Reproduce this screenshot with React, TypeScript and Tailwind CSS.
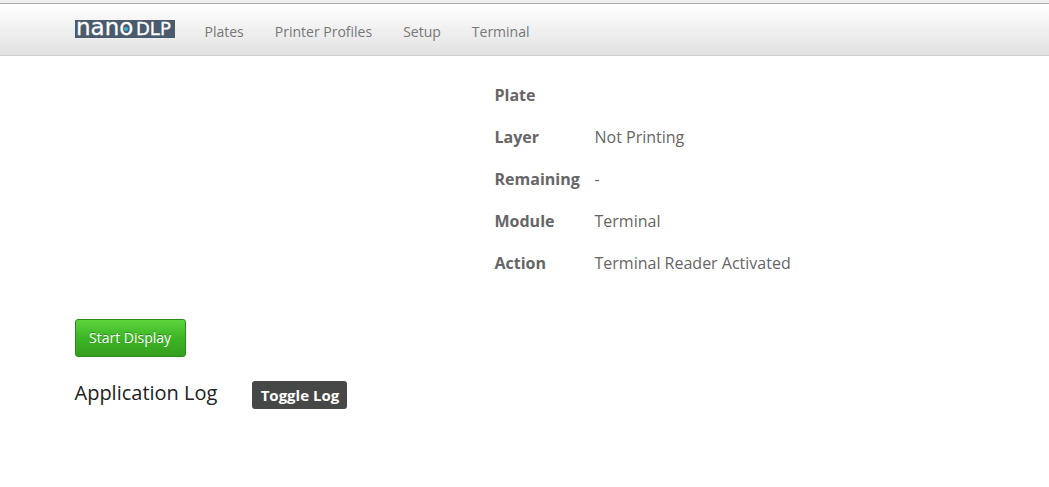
const links = ["Plates", "Printer Profiles", "Setup", "Terminal"];

const status = [
  { label: "Plate", value: "" },
  { label: "Layer", value: "Not Printing" },
  { label: "Remaining", value: "-" },
  { label: "Module", value: "Terminal" },
  { label: "Action", value: "Terminal Reader Activated" },
];

function Logo() {
  return (
    <svg
      className="overflow-visible"
      width="100"
      height="18"
      viewBox="0 0 100 18"
      role="img"
      aria-label="nanoDLP"
    >
      <rect width="100" height="18" fill="#4b5b6e" />
      <text y="15" fill="#ffffff" stroke="#ffffff" strokeWidth="0.3" fontFamily="'DejaVu Sans', sans-serif">
        <tspan x="1" fontSize="23">nano</tspan>
        <tspan x="61" fontSize="18">DLP</tspan>
      </text>
      <circle cx="51" cy="9" r="2" fill="#35b6d9" />
    </svg>
  );
}

export default function App() {
  return (
    <div className="min-h-screen bg-white font-['Open_Sans','Noto_Sans',sans-serif] text-base text-[#666]">
      <div className="h-[3px] bg-[#f0f0f0]" />
      <header className="border-t border-b border-t-[#aaa] border-b-[#ccc] bg-linear-to-b from-white to-[#e2e2e2]">
        <div className="mx-auto flex h-[51px] max-w-[900px] items-center">
          <a href="#home" className="-mt-0.5 block">
            <Logo />
          </a>
          <nav className="ml-[15px] flex gap-px text-sm text-[#777]">
            {links.map((link) => (
              <a key={link} href={"#" + link} className="px-[15px] pt-1">
                {link}
              </a>
            ))}
          </nav>
        </div>
      </header>
      <main className="mx-auto max-w-[900px] pt-[18px]">
        <dl className="ml-[420px] grid grid-cols-[100px_1fr]">
          {status.map((row) => (
            <div key={row.label} className="col-span-2 grid h-[42px] grid-cols-subgrid items-center">
              <dt className="font-bold">{row.label}</dt>
              <dd>{row.value}</dd>
            </div>
          ))}
        </dl>
        <button
          type="button"
          className="mt-[35px] flex h-[38px] min-w-[111px] items-center justify-center rounded-[3px] border border-[#2d8a1c] bg-linear-to-b from-[#5bd63c] via-[#3db526] to-[#359f1e] px-3 text-sm text-white text-shadow-[0_-1px_0_rgb(0_0_0/0.3)]"
        >
          Start Display
        </button>
        <section className="mt-6 flex items-center gap-[35px]">
          <h2 className="pb-1 text-xl leading-6 text-[#222]">Application Log</h2>
          <button
            type="button"
            className="h-7 min-w-[95px] rounded-[3px] bg-[#464847] px-2 text-[15px] font-bold text-white"
          >
            Toggle Log
          </button>
        </section>
      </main>
    </div>
  );
}
